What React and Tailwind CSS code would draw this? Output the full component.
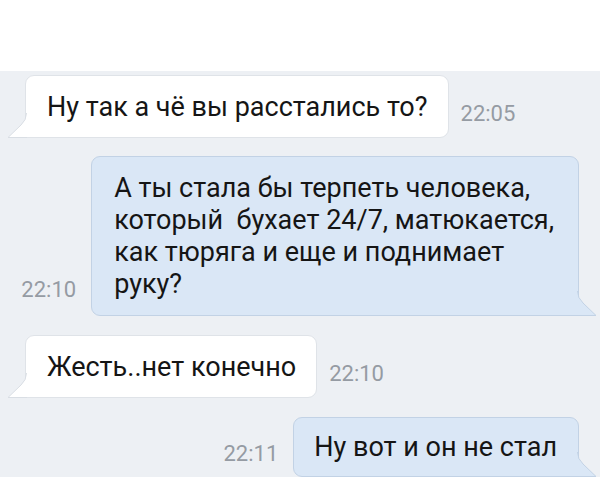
import React from "react";

const font = { fontFamily: "Roboto, 'Noto Sans', Arial, sans-serif" };

function InTail() {
  return (
    <svg className="absolute bottom-[-1px] left-[-19px]" width="20" height="25" viewBox="0 0 20 25">
      <path d="M19.5 0 Q19.5 7 14 12 L1 24.5 L20 24.5 L20 0 Z" fill="#ffffff" />
      <path d="M19.5 0 Q19.5 7 14 12 L1 24.5 L20 24.5" fill="none" stroke="#d9dee4" strokeWidth="1" />
    </svg>
  );
}

function OutTail() {
  return (
    <svg className="absolute bottom-[-1px] right-[-19px]" width="20" height="25" viewBox="0 0 20 25">
      <path d="M0.5 0 Q0.5 7 6 12 L19 24.5 L0 24.5 L0 0 Z" fill="#dae7f6" />
      <path d="M0.5 0 Q0.5 7 6 12 L19 24.5 L0 24.5" fill="none" stroke="#c2d2e5" strokeWidth="1" />
    </svg>
  );
}

function Incoming({ text, time, h, mt }) {
  return (
    <div className={`flex items-end pl-[25px] ${mt}`}>
      <div className={`relative bg-white border border-[#dfe3e8] rounded-[9px] rounded-bl-none pl-[21px] pr-[20px] flex items-center whitespace-nowrap ${h} text-[27px] leading-[32px] text-[#151515]`}>
        {text}
        <InTail />
      </div>
      <div className="ml-[12px] mb-[12px] text-[22px] leading-[24px] text-[#959ba3]">{time}</div>
    </div>
  );
}

function Outgoing({ children, time, h, mt, timeMb, px }) {
  return (
    <div className={`flex items-end justify-end pr-[21px] ${mt}`}>
      <div className={`mr-[15px] ${timeMb} text-[22px] leading-[24px] text-[#959ba3]`}>{time}</div>
      <div className={`relative bg-[#dae7f6] border border-[#c2d2e5] rounded-[9px] rounded-br-none ${px} whitespace-nowrap ${h} text-[27px] leading-[32px] text-[#151515]`}>
        {children}
        <OutTail />
      </div>
    </div>
  );
}

export default function App() {
  return (
    <div className="w-[604px] h-[483px] bg-white overflow-hidden" style={font}>
      <div className="h-[71px]" />
      <div className="w-[600px] h-[406px] bg-[#edf0f4] pt-[4px]">
        <Incoming text="Ну так а чё вы расстались то?" time="22:05" h="h-[63px]" mt="" />
        <Outgoing time="22:10" h="h-[160px] pt-[15px]" px="pl-[22px] pr-[24px]" mt="mt-[18px]" timeMb="mb-[14px]">
          <div>
            А ты стала бы терпеть человека,<br />
            который&nbsp; бухает 24/7, матюкается,<br />
            как тюряга и еще и поднимает<br />
            руку?
          </div>
        </Outgoing>
        <Incoming text="Жесть..нет конечно" time="22:10" h="h-[63px]" mt="mt-[19px]" />
        <Outgoing time="22:11" h="h-[60px] flex items-center" px="pl-[20px] pr-[21px]" mt="mt-[19px]" timeMb="mb-[11px]">
          Ну вот и он не стал
        </Outgoing>
      </div>
    </div>
  );
}
